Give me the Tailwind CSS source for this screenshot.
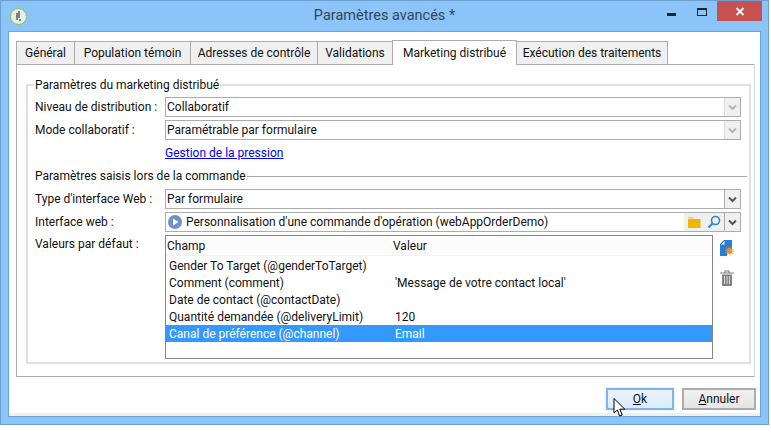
<!DOCTYPE html>
<html lang="fr">
  <head>
    <meta charset="UTF-8" />
    <title>Paramètres avancés</title>
    <script src="https://cdn.jsdelivr.net/npm/@tailwindcss/browser@4"></script>
  </head>

  <body class="bg-white font-['Roboto',sans-serif] text-[12px] leading-[16px] text-[#111111] overflow-hidden">
    <div class="relative w-[769px] h-[425px] bg-[#8ac4f8] border border-[#6a9fd0] flex flex-col">
      <!-- title bar -->
      <div class="h-[30px] flex items-start relative">
        <div class="w-[113px] shrink-0">
          <div class="ml-[9px] mt-[7px] w-[17px] h-[17px] rounded-full bg-[#e8ece4] border border-[#8cc63f] flex items-center justify-center">
            <svg width="9" height="11" viewBox="0 0 9 11"><path d="M5 0v7M3 2v7" stroke="#555" stroke-width="1.4" fill="none"/><circle cx="6" cy="9" r="1" fill="#555"/></svg>
          </div>
        </div>
        <div class="flex-1 text-center text-[14.5px] leading-[20px] mt-[5px] text-[#3a4552] whitespace-nowrap">Paramètres avancés *</div>
        <div class="w-[113px] shrink-0 flex items-start">
          <div class="w-[32px] h-[20px] flex justify-center"><div class="mt-[12px] w-[9px] h-[3px] bg-[#222]"></div></div>
          <div class="w-[30px] h-[20px] flex justify-center"><div class="mt-[7px] w-[10px] h-[8px] border border-t-2 border-[#222]"></div></div>
          <div class="w-[45px] h-[20px] bg-[#c75050] flex items-center justify-center">
            <svg width="10" height="9" viewBox="0 0 10 9"><path d="M1.500 1l7 7M8.500 1l-7 7" stroke="#fff" stroke-width="1.800"/></svg>
          </div>
        </div>
      </div>

      <!-- client area -->
      <div class="mx-[7px] h-[386px] bg-white border border-[#6aa6dc] flex flex-col">
        <div class="h-[384px] border-b-[3px] border-[#f0f0f0] pl-[7px] pr-[4px] pt-[7px] flex flex-col">
          <!-- tabs -->
          <div class="h-[25px] flex items-end relative z-10">
            <div class="w-[59px] h-[23px] bg-[#f0f0f0] border border-b-0 border-[#acacac] text-center pt-[3px]">Général</div>
            <div class="w-[117px] h-[23px] -ml-[1px] bg-[#f0f0f0] border border-b-0 border-[#acacac] text-center pt-[3px]">Population témoin</div>
            <div class="w-[128px] h-[23px] -ml-[1px] bg-[#f0f0f0] border border-b-0 border-[#acacac] text-center pt-[3px]">Adresses de contrôle</div>
            <div class="w-[76px] h-[23px] -ml-[1px] bg-[#f0f0f0] border border-b-0 border-[#acacac] text-center pt-[3px]">Validations</div>
            <div class="w-[125px] h-[25px] -ml-[1px] -mb-[1px] bg-white border border-b-0 border-[#acacac] text-center pt-[4px] relative z-10">Marketing distribué</div>
            <div class="w-[152px] h-[23px] -ml-[1px] bg-[#f0f0f0] border border-b-0 border-[#acacac] text-center pt-[3px]">Exécution des traitements</div>
          </div>

          <!-- tab panel -->
          <div class="w-[739px] h-[313px] border border-[#acacac] border-r-[#dcdcdc] pl-[9px] pr-[4px] pt-[13px]">
            <fieldset class="w-[725px] h-[286px] border-2 border-[#e0e0e0] pl-[6px] pt-0">
              <legend class="px-[1px] leading-[14px] -mt-[1px]">Paramètres du marketing distribué</legend>

              <div class="flex items-center h-[20px] mt-[5px]">
                <label class="w-[131px] shrink-0 whitespace-nowrap pl-[1px]">Niveau de distribution :</label>
                <div class="w-[576px] h-[20px] border border-[#acacac] flex items-center">
                  <span class="flex-1 pl-[1px]">Collaboratif</span>
                  <div class="w-[16px] h-[18px] bg-[#f0f0f0] border-l border-[#dcdcdc] flex items-center justify-center">
                    <svg width="9" height="7" viewBox="0 0 9 7"><path d="M1 1.500l3.500 3.500L8 1.500" stroke="#b5b5b5" stroke-width="2" fill="none"/></svg>
                  </div>
                </div>
              </div>

              <div class="flex items-center h-[20px] mt-[3px]">
                <label class="w-[131px] shrink-0 whitespace-nowrap pl-[1px]">Mode collaboratif :</label>
                <div class="w-[576px] h-[20px] border border-[#acacac] flex items-center">
                  <span class="flex-1 pl-[1px]">Paramétrable par formulaire</span>
                  <div class="w-[16px] h-[18px] bg-[#f0f0f0] border-l border-[#dcdcdc] flex items-center justify-center">
                    <svg width="9" height="7" viewBox="0 0 9 7"><path d="M1 1.500l3.500 3.500L8 1.500" stroke="#b5b5b5" stroke-width="2" fill="none"/></svg>
                  </div>
                </div>
              </div>

              <div class="pl-[131px] mt-[5px] h-[16px]"><a href="#" class="text-[#0000ee] underline">Gestion de la pression</a></div>

              <div class="flex items-center h-[16px] mt-[7px]">
                <span class="pl-[1px] whitespace-nowrap">Paramètres saisis lors de la commande</span>
                <div class="flex-1 mr-[2px] ml-[1px] h-[1px] bg-[#a8a8a8]"></div>
              </div>

              <div class="flex items-center h-[20px] mt-[5px]">
                <label class="w-[131px] shrink-0 whitespace-nowrap pl-[1px]">Type d'interface Web :</label>
                <div class="w-[576px] h-[20px] border border-[#acacac] flex items-center">
                  <span class="flex-1 pl-[1px]">Par formulaire</span>
                  <div class="w-[16px] h-[18px] bg-[#f0f0f0] border-l border-[#acacac] flex items-center justify-center">
                    <svg width="9" height="7" viewBox="0 0 9 7"><path d="M1 1.500l3.500 3.500L8 1.500" stroke="#555" stroke-width="2" fill="none"/></svg>
                  </div>
                </div>
              </div>

              <div class="flex items-center h-[20px] mt-[3px]">
                <label class="w-[131px] shrink-0 whitespace-nowrap pl-[1px]">Interface web :</label>
                <div class="w-[576px] h-[20px] border border-[#acacac] flex items-center">
                  <svg class="ml-[2px] mr-[4px]" width="14" height="14" viewBox="0 0 14 14"><circle cx="7" cy="7" r="7" fill="#6f93c4"/><path d="M5 3.500v7l5.500-3.500z" fill="#fff"/></svg>
                  <span class="flex-1 whitespace-nowrap">Personnalisation d'une commande d'opération (webAppOrderDemo)</span>
                  <div class="w-[40px] h-[18px] bg-[#f0f0f0] flex items-center justify-between pl-[4px] pr-[3px]">
                    <svg width="13" height="13" viewBox="0 0 13 13"><path d="M0 1h5l1 1.500H0z" fill="#f5c95a"/><path d="M0 3h12.500v9H0z" fill="#efb700"/></svg>
                    <svg width="14" height="14" viewBox="0 0 14 14"><circle cx="8.500" cy="5.500" r="4" stroke="#2d87d8" stroke-width="1.600" fill="none"/><path d="M5.500 8.500L1.500 12.500" stroke="#2d87d8" stroke-width="2"/></svg>
                  </div>
                  <div class="w-[16px] h-[18px] bg-[#f0f0f0] border-l border-[#acacac] flex items-center justify-center">
                    <svg width="9" height="7" viewBox="0 0 9 7"><path d="M1 1.500l3.500 3.500L8 1.500" stroke="#555" stroke-width="2" fill="none"/></svg>
                  </div>
                </div>
              </div>

              <div class="flex items-start mt-[3px]">
                <label class="w-[131px] shrink-0 pt-[1px] pl-[1px] whitespace-nowrap">Valeurs par défaut :</label>
                <div class="w-[548px] h-[124px] border border-[#82878c] flex flex-col shrink-0">
                  <div class="h-[20px] shrink-0 bg-[#fcfcfc] border-b border-[#eef3fa] flex items-center pl-[1px]">
                    <span class="w-[226px]">Champ</span><span>Valeur</span>
                  </div>
                  <div class="h-[17px] flex items-center pl-[3px] mt-[1px]"><span class="w-[226px]">Gender To Target (@genderToTarget)</span><span></span></div>
                  <div class="h-[17px] flex items-center pl-[3px]"><span class="w-[226px]">Comment (comment)</span><span>'Message de votre contact local'</span></div>
                  <div class="h-[17px] flex items-center pl-[3px]"><span class="w-[226px]">Date de contact (@contactDate)</span><span></span></div>
                  <div class="h-[17px] flex items-center pl-[3px]"><span class="w-[226px]">Quantité demandée (@deliveryLimit)</span><span>120</span></div>
                  <div class="h-[17px] flex items-center pl-[3px] bg-[#3399ff] text-white"><span class="w-[226px]">Canal de préférence (@channel)</span><span>Email</span></div>
                </div>
                <div class="ml-[7px] flex flex-col items-start pt-[5px] gap-[14px]">
                  <svg width="14" height="16" viewBox="0 0 14 16"><path d="M0 16V4L4 0h8v9H7v7z" fill="#2b7cd3"/><path d="M1 4.500L4.500 1v3.500z" fill="#fff"/><circle cx="9.500" cy="11" r="3" fill="#f7941d"/><circle cx="9.500" cy="11" r="4" fill="none" stroke="#f7941d" stroke-width="1" stroke-dasharray="1 1.500"/></svg>
                  <svg width="14" height="16" viewBox="0 0 14 16"><path d="M0 3h14M5 3V1h4v2" stroke="#808080" stroke-width="1.200" fill="none"/><path d="M2 4.500h10V15a1 1 0 0 1-1 1H3a1 1 0 0 1-1-1z" fill="#808080"/><path d="M4.500 6v8M7 6v8M9.500 6v8" stroke="#d8d8d8" stroke-width="1"/></svg>
                </div>
              </div>
            </fieldset>
          </div>

          <!-- buttons -->
          <div class="flex justify-end gap-[8px] mt-[11px]">
            <button class="w-[68px] h-[22px] border-2 border-[#7eb4ea] bg-gradient-to-b from-[#ecf4fc] to-[#dcecfc] text-center outline outline-1 outline-[#eef4fa]"><span class="underline">O</span>k</button>
            <button class="w-[74px] h-[22px] border-2 border-[#acacac] bg-gradient-to-b from-[#f0f0f0] to-[#e5e5e5] text-center"><span class="underline">A</span>nnuler</button>
          </div>
        </div>
      </div>

      <!-- mouse pointer -->
      <svg class="absolute left-[612px] top-[397px]" width="14" height="20" viewBox="0 0 14 20"><path d="M1 .5v14.500l3.300-3 2.300 6 2.600-1-2.400-5.800h5z" fill="#fff" stroke="#000" stroke-width="1"/></svg>
    </div>
  </body>
</html>
